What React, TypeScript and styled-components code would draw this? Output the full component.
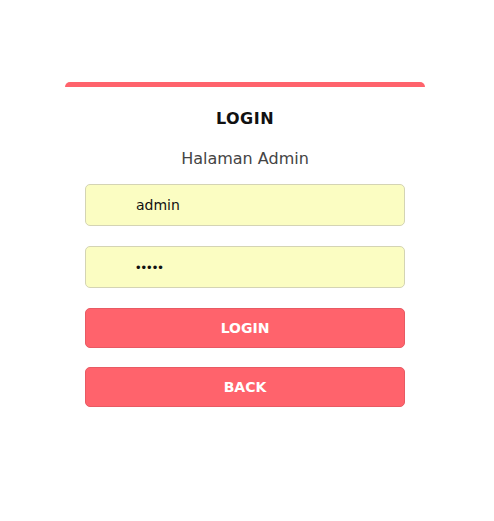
import React, { useState } from "react";
import styled, { createGlobalStyle } from "styled-components";

const GlobalStyle = createGlobalStyle`
  html, body {
    margin: 0;
    padding: 0;
    background: #ffffff;
    font-family: "DejaVu Sans", "Open Sans", sans-serif;
  }
`;

const Page = styled.div`
  width: 494px;
  height: 521px;
  display: flex;
  justify-content: flex-start;
  padding: 82px 0 0 65px;
  box-sizing: border-box;
`;

const Card = styled.div`
  width: 360px;
  border-top: 5px solid #ff636c;
  border-radius: 5px 5px 0 0;
  padding: 0 20px;
  box-sizing: border-box;
  display: flex;
  flex-direction: column;
  align-items: stretch;
`;

const Title = styled.h2`
  margin: 22px 0 0;
  font-size: 16px;
  font-weight: bold;
  text-align: center;
  color: #111;
  letter-spacing: 0.5px;
`;

const Subtitle = styled.p`
  margin: 21px 0 0;
  font-size: 16px;
  text-align: center;
  color: #444444;
`;

const Form = styled.form`
  margin-top: 16px;
  display: flex;
  flex-direction: column;
  gap: 20px;
`;

const Input = styled.input<{ $secret?: boolean }>`
  height: 42px;
  box-sizing: border-box;
  border: 1px solid #d4d4b4;
  border-radius: 5px;
  background: #fbfdc2;
  padding: 0 0 0 50px;
  font-family: ${(p) => (p.$secret ? '"Liberation Sans", sans-serif' : "inherit")};
  font-size: ${(p) => (p.$secret ? "13px" : "14px")};
  letter-spacing: ${(p) => (p.$secret ? "1px" : "0")};
  color: #111;
  outline: none;
`;

const Button = styled.button`
  height: 40px;
  border: 1px solid #e85a63;
  border-radius: 5px;
  background: #ff636c;
  color: #ffffff;
  font-family: inherit;
  font-size: 14px;
  font-weight: bold;
  cursor: pointer;
`;

const Buttons = styled.div`
  display: flex;
  flex-direction: column;
  gap: 19px;
`;

export default function App() {
  const [user, setUser] = useState("admin");
  const [pass, setPass] = useState("admin");

  return (
    <>
      <GlobalStyle />
      <Page>
        <Card>
          <Title>LOGIN</Title>
          <Subtitle>Halaman Admin</Subtitle>
          <Form onSubmit={(e) => e.preventDefault()}>
            <Input value={user} onChange={(e) => setUser(e.target.value)} />
            <Input
              $secret
              type="password"
              value={pass}
              onChange={(e) => setPass(e.target.value)}
            />
            <Buttons>
              <Button type="submit">LOGIN</Button>
              <Button type="button">BACK</Button>
            </Buttons>
          </Form>
        </Card>
      </Page>
    </>
  );
}
